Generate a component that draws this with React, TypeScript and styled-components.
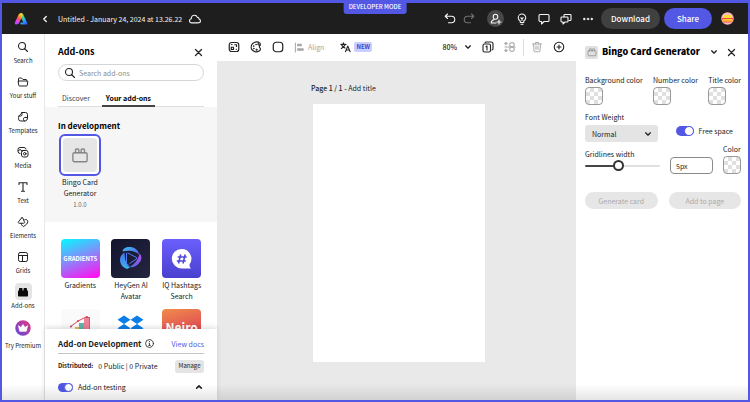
import React, { useState } from "react";
import styled, { createGlobalStyle, css } from "styled-components";

const accent = "#5258e4";
const ink = "#222222";

const GlobalStyle = createGlobalStyle`
  *, *::before, *::after { box-sizing: border-box; }
  html, body, #root { height: 100%; }
  body {
    margin: 0;
    background: #fff;
    color: ${ink};
    font-family: "Noto Sans CJK SC", "Noto Sans", sans-serif;
    font-size: 7px;
    line-height: 12px;
  }
  button, input, select { font: inherit; color: inherit; margin: 0; }
  h1, h2, h3, p, ul { margin: 0; padding: 0; font-size: inherit; }
  ul { list-style: none; }
  svg { flex: none; display: block; }
`;

/* ---------- frame ---------- */

const Frame = styled.div`
  position: relative;
  display: flex;
  flex-direction: column;
  height: 100vh;
  border: 2px solid ${accent};
  border-top-width: 3px;
  overflow: hidden;
`;

const ModeBadge = styled.div`
  position: absolute;
  top: -3px;
  left: 50%;
  transform: translateX(-50%);
  padding: 3px 5px 0;
  height: 14px;
  border-radius: 0 0 3px 3px;
  background: ${accent};
  color: #fff;
  font-size: 6px;
  font-weight: 500;
  line-height: 7px;
  white-space: nowrap;
`;

const BottomFade = styled.div`
  position: absolute;
  inset: auto 0 0 0;
  height: 16px;
  background: linear-gradient(rgba(0, 0, 0, 0), rgba(0, 0, 0, 0.1));
  pointer-events: none;
`;

const Main = styled.main`
  flex: 1;
  min-height: 0;
  display: flex;
`;

const IconButton = styled.button<{ $size?: number; $muted?: boolean }>`
  flex: none;
  display: grid;
  place-items: center;
  width: ${(p) => p.$size ?? 12}px;
  height: ${(p) => p.$size ?? 12}px;
  padding: 0;
  border: 0;
  background: none;
  color: inherit;
  opacity: ${(p) => (p.$muted ? 0.38 : 1)};
`;

/* ---------- header ---------- */

const Header = styled.header`
  flex: none;
  display: flex;
  align-items: center;
  height: 31px;
  padding: 0 14px 0 12px;
  background: #1e1e1e;
  color: #f5f5f5;
`;

const BackButton = styled(IconButton)`
  margin: 0 7px 0 11px;
`;

const DocTitle = styled.h1`
  margin-right: 6px;
  font-size: 7px;
  font-weight: 400;
  white-space: nowrap;
`;

const HeaderActions = styled.div`
  display: flex;
  align-items: center;
  margin-left: auto;
`;

const HistoryGroup = styled.div`
  display: flex;
  gap: 7px;
  margin-right: 12px;
`;

const InviteButton = styled(IconButton)`
  width: 17px;
  height: 17px;
  border-radius: 50%;
  background: #484848;
  margin-right: 12px;
`;

const HelpGroup = styled.div`
  display: flex;
  gap: 10px;
  margin-right: 7px;
`;

const Pill = styled.button<{ $primary?: boolean }>`
  height: 21px;
  width: ${(p) => (p.$primary ? 48 : 59)}px;
  margin-right: ${(p) => (p.$primary ? 9 : 4)}px;
  padding: 0;
  border: 0;
  border-radius: 11px;
  background: ${(p) => (p.$primary ? accent : "#404040")};
  color: #fff;
  font-size: 8px;
  font-weight: 500;
  line-height: 20px;
`;

/* ---------- rail ---------- */

const Rail = styled.nav`
  flex: none;
  width: 43px;
  border-right: 1px solid #e8e8e8;
`;

const RailList = styled.ul`
  && {
    display: flex;
    flex-direction: column;
    padding-top: 4px;
  }
`;

const RailItem = styled.li`
  height: 35px;
`;

const RailButton = styled.button`
  display: flex;
  flex-direction: column;
  align-items: center;
  width: 100%;
  padding: 0;
  border: 0;
  background: none;
  font-size: 6px;
  line-height: 10px;
  white-space: nowrap;
`;

const RailIcon = styled.span<{ $active?: boolean; $large?: boolean }>`
  display: grid;
  place-items: center;
  width: 17px;
  height: 17px;
  margin-bottom: ${(p) => (p.$large ? 5 : 1)}px;
  margin-top: ${(p) => (p.$large ? 1 : 0)}px;
  border-radius: 4px;
  background: ${(p) => (p.$active ? "#e4e4e4" : "transparent")};
`;

/* ---------- add-ons panel ---------- */

const AddOnsPanel = styled.section`
  flex: none;
  display: flex;
  flex-direction: column;
  width: 172px;
  background: #fff;
`;

const PanelTop = styled.div`
  flex: none;
  padding: 11px 13px 0;
`;

const TitleRow = styled.div`
  display: flex;
  align-items: center;
  justify-content: space-between;
`;

const PanelTitle = styled.h2`
  font-size: 9px;
  line-height: 14px;
  font-weight: 700;
  color: #000;
`;

const SearchBox = styled.label`
  display: flex;
  align-items: center;
  gap: 3px;
  height: 17px;
  margin-top: 5px;
  padding: 0 5px;
  border: 1px solid #d5d5d5;
  border-radius: 9px;
`;

const SearchInput = styled.input`
  flex: 1;
  min-width: 0;
  height: 14px;
  padding: 0;
  border: 0;
  outline: 0;
  background: none;
  font-size: 7px;
  &::placeholder { color: #8c8c8c; opacity: 1; }
`;

const Tabs = styled.div`
  display: flex;
  gap: 8px;
  margin-top: 10px;
  border-bottom: 1px solid #dedede;
`;

const Tab = styled.button<{ $active?: boolean }>`
  height: 16px;
  margin-bottom: -1px;
  padding: 0 4px;
  border: 0;
  border-bottom: 2px solid ${(p) => (p.$active ? "#444" : "transparent")};
  background: none;
  font-size: 7px;
  line-height: 12px;
  font-weight: ${(p) => (p.$active ? 700 : 400)};
  color: ${(p) => (p.$active ? "#000" : "#444")};
`;

const DevSection = styled.div`
  flex: none;
  height: 115px;
  padding: 13px 13px 0;
  background: #f6f6f6;
`;

const SectionTitle = styled.h3`
  font-size: 8px;
  line-height: 12px;
  font-weight: 700;
  color: #000;
`;

const DevCard = styled.button`
  display: flex;
  flex-direction: column;
  align-items: center;
  width: 44px;
  margin-top: 2px;
  padding: 0;
  border: 0;
  background: none;
  font-size: 7px;
  line-height: 11px;
`;

const DevThumb = styled.span`
  display: grid;
  place-items: center;
  width: 42px;
  height: 42px;
  margin-bottom: 1px;
  border: 2px solid ${accent};
  border-radius: 6px;
  background: #fff;
`;

const DevThumbInner = styled.span`
  display: grid;
  place-items: center;
  width: 34px;
  height: 34px;
  border-radius: 4px;
  background: #e6e6e6;
  color: #868686;
`;

const Version = styled.span`
  font-size: 6px;
  color: #666;
`;

const Catalog = styled.ul`
  && {
    flex: 1;
    min-height: 0;
    overflow: hidden;
    display: grid;
    grid-template-columns: repeat(3, 1fr);
    grid-auto-rows: 70px;
    align-content: start;
    padding: 17px 10px 0;
  }
`;

const CatalogButton = styled.button`
  display: flex;
  flex-direction: column;
  align-items: center;
  width: 100%;
  padding: 0;
  border: 0;
  background: none;
  font-size: 7px;
  line-height: 11px;
`;

const Tile = styled.span<{ $background: string }>`
  display: grid;
  place-items: center;
  width: 39px;
  height: 39px;
  margin-bottom: 2px;
  border-radius: 4px;
  background: ${(p) => p.$background};
`;

const GradientsWord = styled.span`
  font-size: 6px;
  font-weight: 700;
  color: #fff;
`;

const NeiroWord = styled.span`
  align-self: start;
  padding-top: 11px;
  font-size: 12px;
  line-height: 13px;
  font-weight: 700;
  color: #fff;
`;

const DevFooter = styled.section`
  position: relative;
  flex: none;
  height: 71px;
  padding: 7px 13px 0;
  background: #fff;
  box-shadow: 0 -2px 5px rgba(0, 0, 0, 0.12);
`;

const FooterHead = styled.div`
  display: flex;
  align-items: center;
  height: 18px;
  gap: 4px;
  border-bottom: 1px solid #c4c4c4;
  padding-bottom: 2px;
`;

const FooterTitle = styled.h2`
  font-size: 8px;
  font-weight: 700;
  white-space: nowrap;
`;

const DocsLink = styled.a`
  margin-left: auto;
  color: ${accent};
  text-decoration: none;
  white-space: nowrap;
`;

const FooterRow = styled.div`
  display: flex;
  align-items: center;
  gap: 5px;
  height: 24px;
  white-space: nowrap;
  & + & { height: 18px; }
  & > :last-child { margin-left: auto; }
`;

const Distributed = styled.strong`
  font-size: 6px;
`;

const Counts = styled.span`
  font-size: 7px;
`;

const ManageButton = styled.button`
  width: 29px;
  height: 13px;
  padding: 0;
  border: 0;
  border-radius: 3px;
  background: #e4e4e4;
  font-size: 6px;
  line-height: 12px;
`;

const Toggle = styled.input<{ $wide?: boolean }>`
  appearance: none;
  flex: none;
  display: block;
  width: ${(p) => (p.$wide ? 18 : 15)}px;
  height: ${(p) => (p.$wide ? 10 : 9)}px;
  border-radius: 5px;
  background: #909090;
  &::before {
    content: "";
    display: block;
    height: 100%;
    aspect-ratio: 1;
    border: 1px solid #909090;
    border-radius: 50%;
    background: #fff;
  }
  &:checked { background: ${accent}; }
  &:checked::before { margin-left: auto; border-color: ${accent}; }
`;

const ToggleLabel = styled.label`
  display: flex;
  align-items: center;
  gap: 5px;
  white-space: nowrap;
`;

/* ---------- canvas ---------- */

const Workspace = styled.section`
  flex: 1;
  min-width: 0;
  display: flex;
  flex-direction: column;
  background: #e9e9e9;
`;

const Toolbar = styled.div`
  flex: none;
  display: flex;
  align-items: center;
  gap: 16px;
  height: 27px;
  padding: 0 11px 1px;
  background: #fff;
`;

const ToolGroup = styled.div<{ $end?: boolean }>`
  display: flex;
  align-items: center;
  gap: 10px;
  margin-left: ${(p) => (p.$end ? "auto" : "0")};
`;

const ToolTextButton = styled.button<{ $muted?: boolean }>`
  display: flex;
  align-items: center;
  gap: 3px;
  padding: 0;
  border: 0;
  background: none;
  white-space: nowrap;
  color: ${(p) => (p.$muted ? "#a6a6a6" : ink)};
`;

const NewTag = styled.span`
  padding: 0 2px;
  height: 10px;
  border-radius: 2px;
  background: #ccceff;
  color: #4046ca;
  font-size: 6px;
  line-height: 9px;
  font-weight: 700;
`;

const ZoomButton = styled(ToolTextButton)`
  gap: 7px;
  font-weight: 500;
`;

const Divider = styled.span`
  width: 1px;
  height: 17px;
  margin: 0 -3px;
  background: #dcdcdc;
`;

const Stage = styled.div`
  flex: 1;
  min-height: 0;
  display: flex;
  justify-content: center;
  padding: 21px 0 0 3px;
`;

const PageWrap = styled.div`
  width: 174px;
`;

const PageName = styled.p`
  height: 22px;
  font-size: 7px;
  line-height: 12px;
`;

const PageNumber = styled.span`
  font-weight: 500;
`;

const Artboard = styled.div`
  margin-left: 2px;
  aspect-ratio: 2 / 3;
  background: #fff;
`;

/* ---------- generator panel ---------- */

const GeneratorPanel = styled.aside`
  flex: none;
  width: 172px;
  padding: 10px 7px 0 9px;
  background: #fff;
`;

const GeneratorHead = styled.div`
  display: flex;
  align-items: center;
  height: 16px;
`;

const GeneratorIcon = styled.span`
  flex: none;
  display: grid;
  place-items: center;
  width: 13px;
  height: 13px;
  margin-right: 4px;
  border-radius: 2px;
  background: #e0e0e0;
  color: #8a8a8a;
`;

const GeneratorTitle = styled(PanelTitle)`
  flex: 1;
  font-weight: 900;
  white-space: nowrap;
`;

const GeneratorActions = styled.div`
  display: flex;
  gap: 5px;
  margin-right: 4px;
`;

const ColorRow = styled.div`
  display: flex;
  justify-content: space-between;
  margin-top: 14px;
`;

const Field = styled.div`
  display: flex;
  flex-direction: column;
  align-items: flex-start;
  white-space: nowrap;
`;

const Swatch = styled.button`
  width: 18px;
  height: 18px;
  margin-top: 1px;
  padding: 0;
  border: 1px solid #999;
  border-radius: 4px;
  background: repeating-conic-gradient(#e0e0e0 0 25%, #fff 0 50%) 0 0 / 8px 8px;
`;

const WeightRow = styled.div`
  display: flex;
  align-items: flex-end;
  justify-content: space-between;
  margin-top: 6px;
  padding-right: 8px;
`;

const SelectShell = styled.div`
  display: grid;
  align-items: center;
  width: 73px;
  margin-top: 2px;
  & > * { grid-area: 1 / 1; }
  & > svg { justify-self: end; margin-right: 6px; pointer-events: none; }
`;

const WeightSelect = styled.select`
  appearance: none;
  width: 100%;
  height: 17px;
  padding: 0 7px;
  border: 0;
  border-radius: 3px;
  background: #e4e4e4;
  line-height: 16px;
`;

const FreeSpaceWrap = styled.div`
  padding-bottom: 5px;
`;

const GridRow = styled.div`
  display: grid;
  grid-template-columns: 1fr 43px 18px;
  column-gap: 10px;
  align-items: end;
  margin-top: 1px;
`;

const sliderTrack = css`
  height: 2px;
  border-radius: 1px;
  background: linear-gradient(90deg, #464646 45%, #e0e0e0 45%);
`;

const Slider = styled.input`
  appearance: none;
  display: block;
  width: 100%;
  height: 12px;
  margin-bottom: 2px;
  background: none;
  &::-webkit-slider-runnable-track { ${sliderTrack} }
  &::-webkit-slider-thumb {
    appearance: none;
    width: 11px;
    height: 11px;
    margin-top: -5px;
    border: 2px solid #333;
    border-radius: 50%;
    background: #fff;
  }
`;

const WidthInput = styled.input`
  width: 100%;
  height: 17px;
  padding: 0 5px;
  border: 1px solid #8a8a8a;
  border-radius: 4px;
  background: #fff;
`;

const ButtonRow = styled.div`
  display: grid;
  grid-template-columns: 1fr 1fr;
  gap: 11px;
  margin-top: 18px;
`;

const ActionButton = styled.button`
  height: 17px;
  padding: 0;
  border: 0;
  border-radius: 9px;
  background: #e6e6e6;
  line-height: 16px;
  &:disabled { color: #aaa; }
`;

/* ---------- icons ---------- */

type IconProps = { size?: number; width?: number; children?: React.ReactNode };

const Icon = ({ size = 12, width = 1.8, children }: IconProps) => (
  <svg
    width={size}
    height={size}
    viewBox="0 0 24 24"
    fill="none"
    stroke="currentColor"
    strokeWidth={width}
    strokeLinecap="round"
    strokeLinejoin="round"
    aria-hidden="true"
  >
    {children}
  </svg>
);

const SearchIcon = () => (
  <Icon size={12} width={2.2}><circle cx="10" cy="10" r="7" /><path d="M15.5 15.5 21 21" /></Icon>
);
const CloseIcon = () => <Icon size={9} width={3.4}><path d="M4 4l16 16M20 4 4 20" /></Icon>;
const ChevronDown = () => <Icon size={8} width={4}><path d="M5 8.5l7 7 7-7" /></Icon>;
const ChevronUp = () => <Icon size={8} width={4.6}><path d="M5 15.5l7-7 7 7" /></Icon>;
const ChevronLeft = () => <Icon size={10} width={3.2}><path d="M15 6l-6 6 6 6" /></Icon>;
const CloudIcon = () => (
  <Icon size={13} width={2}><path d="M5.5 20h14a3.6 3.6 0 0 0 .7-7.1 2.6 2.6 0 0 0-2.8-2.9A6 6 0 0 0 6 10.5c.2.6.2 1.2.1 1.9A3.9 3.9 0 0 0 5.5 20z" /></Icon>
);
const UndoIcon = () => (
  <Icon size={12} width={2.2}><path d="M7 2 2.5 6.5 7 11M3 6.5h12a6 6 0 0 1 0 13H9" /></Icon>
);
const RedoIcon = () => (
  <Icon size={12} width={2.2}><path d="M17 2l4.5 4.5L17 11M21 6.5H9a6 6 0 0 0 0 13h6" /></Icon>
);
const PersonAddIcon = () => (
  <Icon size={12} width={2.2}><ellipse cx="11" cy="7.5" rx="4.5" ry="5" /><path d="M8.5 13c-4 1-6 3-6 7H12M18 14v8M14 18h8" /></Icon>
);
const BulbIcon = () => (
  <Icon size={12} width={2.2}><path d="M8.5 16C6 14.5 4.5 12.5 4.5 9.5a7.5 7.5 0 0 1 15 0c0 3-1.5 5-4 6.5v3h-7zM10 22.5h4M12 15v-4M9.5 9.5 12 11.5l2.5-2" /></Icon>
);
const CommentIcon = () => (
  <Icon size={12} width={2.2}><path d="M4 3h16a2 2 0 0 1 2 2v10a2 2 0 0 1-2 2h-8l-5 5v-5H4a2 2 0 0 1-2-2V5a2 2 0 0 1 2-2z" /></Icon>
);
const ChatsIcon = () => (
  <Icon size={12} width={2.2}><path d="M8 8V4.5A1.5 1.5 0 0 1 9.5 3h11A1.5 1.5 0 0 1 22 4.5v9a1.5 1.5 0 0 1-1.5 1.5H18" /><path d="M3.5 8h11A1.5 1.5 0 0 1 16 9.5v7a1.5 1.5 0 0 1-1.5 1.5H10l-4 4v-4H3.5A1.5 1.5 0 0 1 2 16.5v-7A1.5 1.5 0 0 1 3.5 8z" /></Icon>
);
const DotsIcon = () => (
  <Icon size={12} width={1}><g fill="currentColor"><circle cx="4.5" cy="12" r="1.8" /><circle cx="12" cy="12" r="1.8" /><circle cx="19.5" cy="12" r="1.8" /></g></Icon>
);

const Logo = () => (
  <svg width="14" height="14" viewBox="0 0 28 28" aria-label="Home" role="img">
    <defs>
      <linearGradient id="logoLeft" x1="0" y1="1" x2=".7" y2="0">
        <stop offset="0" stopColor="#7b5cff" />
        <stop offset=".3" stopColor="#d445ff" />
        <stop offset=".55" stopColor="#ff4f5e" />
        <stop offset=".8" stopColor="#ff9b21" />
        <stop offset="1" stopColor="#e9e034" />
      </linearGradient>
      <linearGradient id="logoRight" x1="0" y1="0" x2=".7" y2="1">
        <stop offset="0" stopColor="#ffd42e" />
        <stop offset=".35" stopColor="#55d66b" />
        <stop offset=".7" stopColor="#20a8ff" />
        <stop offset="1" stopColor="#3c5cff" />
      </linearGradient>
    </defs>
    <path d="M13 3c3-1 5 .5 6 3l7.5 16c.8 2-.5 3-2.5 3h-9c-3 0-3-3-1-4h5L12.5 9z" fill="url(#logoRight)" />
    <path d="M9 5.5C10 3 12 2 14.5 2.5 17 3 17.5 5 17 7l-6 13c-1.5 3.5-3.500 5-7 5C1.5 25 .8 23 2 20.5z" fill="url(#logoLeft)" />
  </svg>
);

const Avatar = () => (
  <svg width="13" height="13" viewBox="0 0 26 26" role="img" aria-label="Account">
    <defs>
      <clipPath id="avatarClip"><circle cx="13" cy="13" r="12.5" /></clipPath>
      <linearGradient id="avatarSun" x1="0" y1="0" x2="0" y2="1">
        <stop offset="0" stopColor="#ffd43a" /><stop offset=".55" stopColor="#ffae2b" /><stop offset="1" stopColor="#ef5560" />
      </linearGradient>
    </defs>
    <g clipPath="url(#avatarClip)">
      <rect width="26" height="26" fill="#f9b9ba" />
      <rect x="4" y="6" width="18" height="8" rx="4" fill="#ffdc35" />
      <rect x="2" y="12" width="22" height="3" fill="#f4473c" />
      <rect x="3" y="14" width="20" height="7" rx="2" fill="url(#avatarSun)" />
    </g>
  </svg>
);

const FolderIcon = () => (
  <Icon size={12} width={2}><path d="M3 10V5.5A1.5 1.5 0 0 1 4.5 4H9l3 3h6a1.5 1.5 0 0 1 1.5 1.5V10M3 10h17a1.5 1.5 0 0 1 1.5 1.7l-1 7A1.5 1.5 0 0 1 19 20H5a1.5 1.5 0 0 1-1.5-1.3z" /></Icon>
);
const TemplatesIcon = () => (
  <Icon size={12} width={2}><path d="M10 3h7a4 4 0 0 1 4 4v6c0 4.5-2 7-5 7-2 0-3-1-3-3v-1c0-2 1-3 3-3h4.5" /><path d="M10 3C9 7 3 8 3 13v2.5A4.5 4.5 0 0 0 7.5 20H15M10 3v4a3 3 0 0 1-3 3H4" /></Icon>
);
const MediaIcon = () => (
  <Icon size={12} width={2}><path d="M6 15a4 4 0 0 1-4-4V7a4 4 0 0 1 4-4h8a4 4 0 0 1 4 3M2.5 10 6 7l5 3" /><path d="M12 9h6.500a3.5 3.5 0 0 1 3.5 3.5V18a4 4 0 0 1-4 4h-5a4 4 0 0 1-4-4v-5.5A3.5 3.5 0 0 1 12 9z" /><circle cx="15.5" cy="15.5" r="2.500" /></Icon>
);
const TextIcon = () => <Icon size={12} width={2.2}><path d="M4 7V3.5h16V7M12 3.5v17M9 20.5h6" /></Icon>;
const ElementsIcon = () => (
  <Icon size={12} width={2}>
    <path d="M9.500 3.500 3 11.500c-1 1.500-.3 3 1.500 3h8.500c2 0 2.800-1.600 1.700-3.200L11.500 3.800c-.5-.8-1.400-.9-2-.3z" />
    <path d="M15.500 7.500c3-1.500 6 .3 6 3.500 0 4-3.500 7.500-9 10-2-1.500-3.500-3-4.200-6" />
  </Icon>
);
const GridsIcon = () => (
  <Icon size={12} width={2}><rect x="3" y="3" width="18" height="18" rx="3.5" /><path d="M3 9h18M11 9v12" /></Icon>
);
const BrickIcon = ({ size = 12 }: { size?: number }) => (
  <Icon size={size} width={1.8}>
    <rect x="2.5" y="9" width="19" height="12" rx="2" />
    <path d="M6 9V5.5A1.5 1.5 0 0 1 7.5 4H9a1.5 1.5 0 0 1 1.5 1.5V9M13.5 9V5.5A1.5 1.5 0 0 1 15 4h1.5A1.5 1.5 0 0 1 18 5.5V9" />
  </Icon>
);
const SolidBrickIcon = () => (
  <svg width="12" height="12" viewBox="0 0 24 24" fill="#0b0b0b" aria-hidden="true">
    <rect x="2" y="9" width="20" height="12" rx="1.5" />
    <rect x="4" y="4" width="7" height="7" rx="1.5" />
    <rect x="13" y="4" width="7" height="7" rx="1.5" />
  </svg>
);
const CrownIcon = () => (
  <svg width="16" height="16" viewBox="0 0 32 32" aria-hidden="true">
    <defs>
      <linearGradient id="crown" x1="1" y1="0" x2="0" y2="1">
        <stop offset="0" stopColor="#e93a76" /><stop offset=".5" stopColor="#a43fb0" /><stop offset="1" stopColor="#5a4de0" />
      </linearGradient>
    </defs>
    <circle cx="16" cy="16" r="15.5" fill="url(#crown)" />
    <path d="M7 11.5l5 3.5 4-6 4 6 5-3.5-2.5 11h-13z" fill="#fff" stroke="#fff" strokeWidth="1.5" strokeLinejoin="round" />
  </svg>
);

const ResizeIcon = () => (
  <Icon size={12} width={2.4}><rect x="2.500" y="3" width="19" height="18" rx="4.500" /><path d="M13.500 7.500H17V11M6.500 12v5H11v-4.500H6.500" /><path d="M7 7h1M16.500 16.500h.5" /></Icon>
);
const PaletteIcon = () => (
  <Icon size={12} width={2.2}><path d="M21 8c-3 2-3 4-1 6 1.5 1.5 1 4-1 5.5-4 3-10 2.5-14-1S1.5 8 6 4.5 17 1 19 4M20 4c-2 0-5 1-4 3s4 1 5-1" /><g fill="currentColor" strokeWidth="1"><circle cx="7" cy="10" r="1" /><circle cx="12" cy="7" r="1" /><circle cx="7.5" cy="15" r="1" /><circle cx="13" cy="17.5" r="1.5" /></g></Icon>
);
const SquareIcon = () => <Icon size={12} width={2.4}><rect x="2.5" y="2.5" width="19" height="19" rx="6" /></Icon>;
const AlignIcon = () => (
  <Icon size={11} width={2.2}><path d="M3 2v20" /><g fill="currentColor"><path d="M8 5h8v3H8zM8 15h12v3H8z" /></g></Icon>
);
const TranslateIcon = () => (
  <Icon size={11} width={2.6}><path d="M2 5h11M7.5 2v3M11 5c-1 4-4 7-8 9M4 7c1.5 3 4 5 7 6M12 21l5-12 5 12M14 17.5h6" /></Icon>
);
const PagesIcon = () => (
  <Icon size={12} width={2.2}><rect x="2" y="6" width="15" height="16" rx="3" /><path d="M6 3.5C6.5 2.5 7.5 2 8.5 2H18a4 4 0 0 1 4 4v9c0 1.5-.5 2.5-2 3M8 11.5l2-1.5v8" /></Icon>
);
const AnimateIcon = () => (
  <Icon size={12} width={2.2}><path d="M4 3v5M4 16v5M1.5 5.5 4 3l2.5 2.5M1.5 18.500 4 21l2.5-2.5M2 12h20" /><circle cx="16" cy="7.5" r="4.5" /><circle cx="16" cy="16.5" r="4.5" /></Icon>
);
const TrashIcon = () => (
  <Icon size={12} width={2}><path d="M3 6h18M9 6V3h6v3M5 6l1 14a2 2 0 0 0 2 1.5h8a2 2 0 0 0 2-1.5l1-14M10 10v7M14 10v7" /></Icon>
);
const AddIcon = () => (
  <Icon size={12} width={2.2}><circle cx="12" cy="12" r="9.5" /><path d="M12 8v8M8 12h8" /></Icon>
);
const InfoIcon = () => (
  <Icon size={9} width={2.2}><circle cx="12" cy="12" r="10.5" /><path d="M12 6.5v.5M11 11h1v6M10 17h4" /></Icon>
);

const HeyGenArt = () => (
  <svg width="39" height="39" viewBox="0 0 39 39" aria-hidden="true">
    <defs>
      <linearGradient id="heyA" x1="0" y1="0" x2="0" y2="1">
        <stop offset="0" stopColor="#4b6fe8" /><stop offset="1" stopColor="#38b4f2" />
      </linearGradient>
      <linearGradient id="heyB" x1="0" y1="0" x2="1" y2="1">
        <stop offset="0" stopColor="#3fc0f4" /><stop offset="1" stopColor="#5b55dd" />
      </linearGradient>
      <linearGradient id="heyC" x1="0" y1="1" x2="1" y2="0">
        <stop offset="0" stopColor="#4a6fea" /><stop offset="1" stopColor="#b84bf2" />
      </linearGradient>
    </defs>
    <path d="M13.500 13.500C11 15 9 17.500 9 20.500c0 4.500 2.500 8 7 9.500l3-1.500c-2.500-1.500-5-5-5.500-15z" fill="url(#heyA)" />
    <path d="M11.500 12.500c.5-3.500 4-5 8-4.500 4.500.5 8 3.500 9 8-3.500-3.500-9-5.500-17-3.500z" fill="url(#heyB)" />
    <path d="M28.500 14.500c2.500 2 2.500 6 0 9-2.500 3.500-6.500 5.500-10.500 4.500 5-2 9-6.500 10.500-13.500z" fill="url(#heyC)" />
    <path d="M15.500 14v10.500l3 2.500M16.500 13.800l9 4.700v1.500l-7 4.500" fill="none" stroke="#4f7df0" strokeWidth="1" />
  </svg>
);

const HashArt = () => (
  <svg width="39" height="39" viewBox="0 0 39 39" aria-hidden="true">
    <path d="M19.5 10a9.7 9.7 0 1 0 0 19.4H29c-1-1-1.500-2-1.500-4A9.700 9.700 0 0 0 19.500 10z" fill="#fff" />
    <path d="M18.700 15.500l-2.200 9M23.200 15.500l-2.200 9M15.700 18h9M14.800 22h9" stroke="#5449d8" strokeWidth="1.600" />
  </svg>
);

const ChartArt = () => (
  <svg width="39" height="39" viewBox="0 0 39 39" aria-hidden="true">
    <path d="M14 18h5v21h-5z" fill="#e6b865" />
    <path d="M18 14h6v25h-6z" fill="#5fb5ae" />
    <path d="M23 9.500h5V39h-5z" fill="#ee8198" />
    <path d="M23 9.500 24.500 8H29l-1 1.500zM28 9.500 29 8v31h-1z" fill="#c85e78" />
    <path d="M9 18l8-6 9-4.500" fill="none" stroke="#d8455e" strokeWidth="1" />
    <g fill="#d8455e"><circle cx="10" cy="17.500" r="1" /><circle cx="17" cy="12" r="1" /><circle cx="26" cy="8" r="1" /></g>
  </svg>
);

const DropboxArt = () => (
  <svg width="39" height="39" viewBox="0 0 39 39" aria-hidden="true">
    <path d="M13 6.500l6.500 4.200L13 15l-6.500-4.300zM26 6.500l6.500 4.200L26 15l-6.500-4.300zM13 15l6.500 4.200-6.500 4.200L6.500 19.200zM26 15l6.500 4.200L26 23.400l-6.500-4.200zM13 25l6.500-4.200L26 25l-6.500 4.200z" fill="#0c7ee8" />
  </svg>
);

/* ---------- data ---------- */

const railItems = [
  { label: "Search", icon: <SearchIcon /> },
  { label: "Your stuff", icon: <FolderIcon /> },
  { label: "Templates", icon: <TemplatesIcon /> },
  { label: "Media", icon: <MediaIcon /> },
  { label: "Text", icon: <TextIcon /> },
  { label: "Elements", icon: <ElementsIcon /> },
  { label: "Grids", icon: <GridsIcon /> },
  { label: "Add-ons", icon: <SolidBrickIcon />, active: true },
  { label: "Try Premium", icon: <CrownIcon />, large: true },
];

const catalog = [
  { id: "gradients", lines: ["Gradients"], background: "linear-gradient(160deg, #0ff0ff 5%, #8888fa 48%, #ff10f0 95%)", art: <GradientsWord>GRADIENTS</GradientsWord> },
  { id: "heygen", lines: ["HeyGen AI", "Avatar"], background: "linear-gradient(135deg, #12132c, #252741)", art: <HeyGenArt /> },
  { id: "hashtags", lines: ["IQ Hashtags", "Search"], background: "linear-gradient(#6a5ffc, #4a40cf)", art: <HashArt /> },
  { id: "charts", lines: [], background: "#fafafa", art: <ChartArt /> },
  { id: "dropbox", lines: [], background: "#fff", art: <DropboxArt /> },
  { id: "neiro", lines: [], background: "linear-gradient(165deg, #f08c4b, #df4a55 60%)", art: <NeiroWord>Neiro</NeiroWord> },
];

/* ---------- app ---------- */

const ColorField = ({ label }: { label: string }) => {
  const id = "color-" + label.toLowerCase().replace(/ /g, "-");
  return (
    <Field>
      <label htmlFor={id}>{label}</label>
      <Swatch id={id} type="button" />
    </Field>
  );
};

export default function App() {
  const [testing, setTesting] = useState(true);
  const [freeSpace, setFreeSpace] = useState(true);
  const [lineWidth, setLineWidth] = useState(43);

  return (
    <>
      <GlobalStyle />
      <Frame>
        <Header>
          <Logo />
          <BackButton aria-label="Back"><ChevronLeft /></BackButton>
          <DocTitle>Untitled - January 24, 2024 at 13.26.22</DocTitle>
          <CloudIcon />
          <HeaderActions>
            <HistoryGroup>
              <IconButton aria-label="Undo"><UndoIcon /></IconButton>
              <IconButton aria-label="Redo" $muted><RedoIcon /></IconButton>
            </HistoryGroup>
            <InviteButton aria-label="Invite"><PersonAddIcon /></InviteButton>
            <HelpGroup>
              <IconButton aria-label="Tips"><BulbIcon /></IconButton>
              <IconButton aria-label="Comments"><CommentIcon /></IconButton>
              <IconButton aria-label="Chat"><ChatsIcon /></IconButton>
              <IconButton aria-label="More"><DotsIcon /></IconButton>
            </HelpGroup>
            <Pill>Download</Pill>
            <Pill $primary>Share</Pill>
            <Avatar />
          </HeaderActions>
        </Header>

        <Main>
          <Rail aria-label="Tools">
            <RailList>
              {railItems.map((item) => (
                <RailItem key={item.label}>
                  <RailButton>
                    <RailIcon $active={item.active} $large={item.large}>{item.icon}</RailIcon>
                    {item.label}
                  </RailButton>
                </RailItem>
              ))}
            </RailList>
          </Rail>

          <AddOnsPanel>
            <PanelTop>
              <TitleRow>
                <PanelTitle>Add-ons</PanelTitle>
                <IconButton aria-label="Close add-ons" $size={11}><CloseIcon /></IconButton>
              </TitleRow>
              <SearchBox>
                <SearchIcon />
                <SearchInput placeholder="Search add-ons" aria-label="Search add-ons" />
              </SearchBox>
              <Tabs role="tablist">
                <Tab role="tab">Discover</Tab>
                <Tab role="tab" aria-selected $active>Your add-ons</Tab>
              </Tabs>
            </PanelTop>
            <DevSection>
              <SectionTitle>In development</SectionTitle>
              <DevCard>
                <DevThumb><DevThumbInner><BrickIcon size={18} /></DevThumbInner></DevThumb>
                <span>Bingo Card Generator</span>
                <Version>1.0.0</Version>
              </DevCard>
            </DevSection>
            <Catalog>
              {catalog.map((entry) => (
                <li key={entry.id}>
                  <CatalogButton aria-label={entry.id}>
                    <Tile $background={entry.background}>{entry.art}</Tile>
                    {entry.lines.map((line) => <span key={line}>{line}</span>)}
                  </CatalogButton>
                </li>
              ))}
            </Catalog>
            <DevFooter>
              <FooterHead>
                <FooterTitle>Add-on Development</FooterTitle>
                <InfoIcon />
                <DocsLink href="#docs">View docs</DocsLink>
              </FooterHead>
              <FooterRow>
                <Distributed>Distributed:</Distributed>
                <Counts>0 Public | 0 Private</Counts>
                <ManageButton>Manage</ManageButton>
              </FooterRow>
              <FooterRow>
                <ToggleLabel>
                  <Toggle type="checkbox" checked={testing} onChange={(e) => setTesting(e.target.checked)} />
                  Add-on testing
                </ToggleLabel>
                <IconButton aria-label="Collapse" $size={11}><ChevronUp /></IconButton>
              </FooterRow>
            </DevFooter>
          </AddOnsPanel>

          <Workspace>
            <Toolbar>
              <ToolGroup>
                <IconButton aria-label="Resize"><ResizeIcon /></IconButton>
                <IconButton aria-label="Theme"><PaletteIcon /></IconButton>
                <IconButton aria-label="Background"><SquareIcon /></IconButton>
                <ToolTextButton $muted><AlignIcon />Align</ToolTextButton>
              </ToolGroup>
              <ToolTextButton><TranslateIcon /><NewTag>NEW</NewTag></ToolTextButton>
              <ToolGroup $end>
                <ZoomButton>80%<ChevronDown /></ZoomButton>
                <IconButton aria-label="Pages"><PagesIcon /></IconButton>
                <IconButton aria-label="Animate" $muted><AnimateIcon /></IconButton>
                <Divider />
                <IconButton aria-label="Delete" $muted><TrashIcon /></IconButton>
                <IconButton aria-label="Add"><AddIcon /></IconButton>
              </ToolGroup>
            </Toolbar>
            <Stage>
              <PageWrap>
                <PageName><PageNumber>Page 1 / 1 - </PageNumber>Add title</PageName>
                <Artboard />
              </PageWrap>
            </Stage>
          </Workspace>

          <GeneratorPanel>
            <GeneratorHead>
              <GeneratorIcon><BrickIcon size={10} /></GeneratorIcon>
              <GeneratorTitle>Bingo Card Generator</GeneratorTitle>
              <GeneratorActions>
                <IconButton aria-label="Options"><ChevronDown /></IconButton>
                <IconButton aria-label="Close"><CloseIcon /></IconButton>
              </GeneratorActions>
            </GeneratorHead>
            <ColorRow>
              <ColorField label="Background color" />
              <ColorField label="Number color" />
              <ColorField label="Title color" />
            </ColorRow>
            <WeightRow>
              <Field>
                <label htmlFor="font-weight">Font Weight</label>
                <SelectShell>
                  <WeightSelect id="font-weight" defaultValue="Normal">
                    <option>Normal</option>
                    <option>Bold</option>
                  </WeightSelect>
                  <ChevronDown />
                </SelectShell>
              </Field>
              <FreeSpaceWrap>
                <ToggleLabel>
                  <Toggle $wide type="checkbox" checked={freeSpace} onChange={(e) => setFreeSpace(e.target.checked)} />
                  Free space
                </ToggleLabel>
              </FreeSpaceWrap>
            </WeightRow>
            <GridRow>
              <Field>
                <label htmlFor="grid-width">Gridlines width</label>
                <Slider id="grid-width" type="range" value={lineWidth} onChange={(e) => setLineWidth(Number(e.target.value))} />
              </Field>
              <WidthInput aria-label="Gridlines width value" defaultValue="5px" />
              <ColorField label="Color" />
            </GridRow>
            <ButtonRow>
              <ActionButton disabled>Generate card</ActionButton>
              <ActionButton disabled>Add to page</ActionButton>
            </ButtonRow>
          </GeneratorPanel>
        </Main>

        <ModeBadge>DEVELOPER MODE</ModeBadge>
        <BottomFade />
      </Frame>
    </>
  );
}
